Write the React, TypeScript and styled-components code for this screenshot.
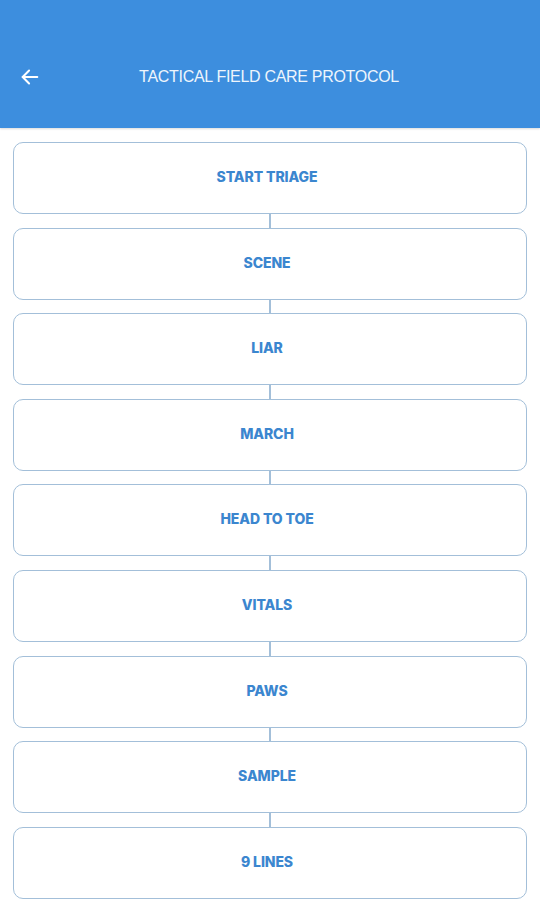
import { FC } from 'react'
import styled, { createGlobalStyle } from 'styled-components'

const GlobalStyle = createGlobalStyle`
  body {
    margin: 0;
    background: #ffffff;
    font-family: Inter, "Liberation Sans", sans-serif;
  }
`

const Page = styled.div`
  width: 540px;
  min-height: 900px;
  background: #fff;
`

const Header = styled.header`
  height: 128px;
  background: #3d8ede;
  display: flex;
  align-items: center;
  padding-top: 26px;
  box-sizing: border-box;
  box-shadow: 0 1px 2px rgba(0, 0, 0, 0.15);
`

const BackButton = styled.div`
  width: 24px;
  height: 24px;
  margin-left: 18px;
  display: flex;
  align-items: center;
  justify-content: center;
`

const Title = styled.h1`
  flex: 1;
  margin: 0 46px 0 0;
  text-align: center;
  color: #eef5fc;
  font-family: "Liberation Sans", Arial, sans-serif;
  font-size: 16px;
  font-weight: 400;
  letter-spacing: -0.3px;
  padding-left: 2px;
`

const List = styled.div`
  display: flex;
  flex-direction: column;
  padding: 14px 13px 0 13px;
`

const Step = styled.div`
  height: 72px;
  box-sizing: border-box;
  border: 1.6px solid #a3bfd9;
  border-radius: 10px;
  display: flex;
  align-items: center;
  justify-content: center;
  color: #3b86cf;
  font-size: 14px;
  font-weight: 800;
  letter-spacing: -0.1px;
  padding: 0 6px 3px 0;
`

const Connector = styled.div`
  width: 1.5px;
  height: 13.6px;
  background: #a3bfd9;
  margin-left: 256px;
`

const steps = [
  'START TRIAGE',
  'SCENE',
  'LIAR',
  'MARCH',
  'HEAD TO TOE',
  'VITALS',
  'PAWS',
  'SAMPLE',
  '9 LINES',
]

const App: FC = () => (
  <Page>
    <GlobalStyle />
    <Header>
      <BackButton>
        <svg width="22" height="22" viewBox="0 0 24 24" fill="none" stroke="#ffffff" strokeWidth="2.2" strokeLinecap="round" strokeLinejoin="round">
          <path d="M20 12H4" />
          <path d="M11 5l-7 7 7 7" />
        </svg>
      </BackButton>
      <Title>TACTICAL FIELD CARE PROTOCOL</Title>
    </Header>
    <List>
      {steps.map((s, i) => (
        <div key={s}>
          {i > 0 && <Connector />}
          <Step>{s}</Step>
        </div>
      ))}
    </List>
  </Page>
)

export default App
